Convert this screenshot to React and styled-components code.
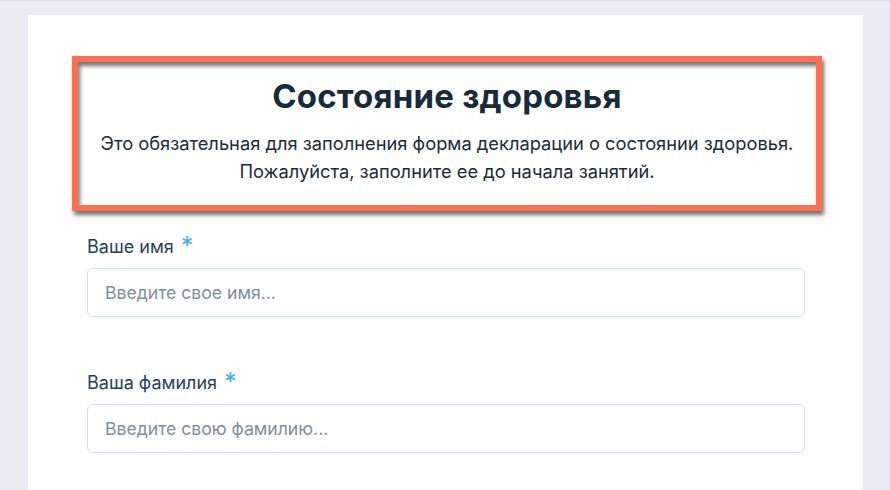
import React from 'react'
import styled, { createGlobalStyle } from 'styled-components'

const Global = createGlobalStyle`
  html, body {
    margin: 0;
    padding: 0;
    background: #ebecf1;
    font-family: Inter, "Liberation Sans", Arial, sans-serif;
  }
  body {
    border-top: 1px solid #dcdde3;
    height: 489px;
    overflow: hidden;
  }
`

const Card = styled.main`
  margin: 14px 27px 0 28px;
  background: #fff;
  padding: 41px 0 40px;
  min-height: 500px;
`

const Highlight = styled.header`
  margin: 0 41px 0 44px;
  border: 6px solid #fe7054;
  box-shadow: 2px 4px 4px rgba(0, 0, 0, 0.55), inset 2px 4px 4px rgba(0, 0, 0, 0.55);
  padding: 16px 10px 20px;
  text-align: center;
  color: #172b3b;
`

const Title = styled.h1`
  margin: 0 0 15px;
  font-size: 33px;
  font-weight: 700;
  line-height: 36px;
  letter-spacing: 0.2px;
`

const Lead = styled.p`
  margin: 0;
  font-size: 18.3px;
  line-height: 28px;
`

const Form = styled.form`
  padding: 24px 58px 0 59px;
  display: flex;
  flex-direction: column;
  gap: 54px;
`

const Field = styled.div`
  display: flex;
  flex-direction: column;
  gap: 9px;
`

const Label = styled.label`
  font-size: 18px;
  line-height: 24px;
  color: #23445a;
`

const Star = styled.span`
  color: #3fb1f2;
  font-size: 25px;
  margin-left: 7px;
  vertical-align: -2px;
  line-height: 0;
`

const Input = styled.input`
  box-sizing: border-box;
  height: 49px;
  width: 100%;
  border: 1.5px solid #c3e5fb;
  border-radius: 6px;
  padding: 0 17px;
  font-family: inherit;
  font-size: 17.6px;
  color: #172b3b;
  outline: none;
  &::placeholder {
    color: #7b8fa2;
  }
`

const fields = [
  { id: 'first', label: 'Ваше имя', placeholder: 'Введите свое имя...' },
  { id: 'last', label: 'Ваша фамилия', placeholder: 'Введите свою фамилию...' },
]

export default function App() {
  return (
    <>
      <Global />
      <Card>
        <Highlight>
          <Title>Состояние здоровья</Title>
          <Lead>
            Это обязательная для заполнения форма декларации о состоянии здоровья.
            <br />
            Пожалуйста, заполните ее до начала занятий.
          </Lead>
        </Highlight>
        <Form>
          {fields.map(f => (
            <Field key={f.id}>
              <Label htmlFor={f.id}>
                {f.label}
                <Star>*</Star>
              </Label>
              <Input id={f.id} placeholder={f.placeholder} />
            </Field>
          ))}
        </Form>
      </Card>
    </>
  )
}
